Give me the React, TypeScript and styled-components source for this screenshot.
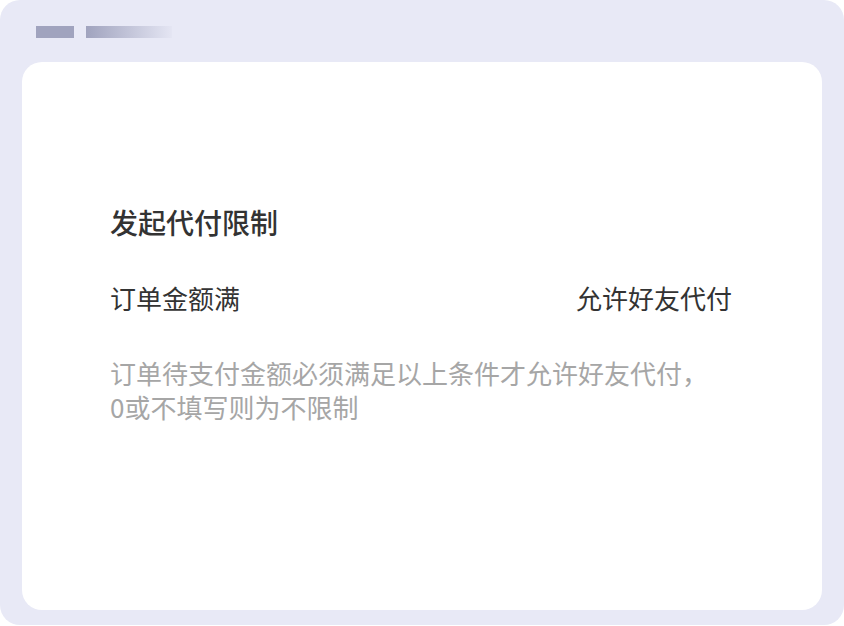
import React from 'react'
import styled, { createGlobalStyle } from 'styled-components'

const GlobalStyle = createGlobalStyle`
  html, body {
    margin: 0;
    padding: 0;
    background: #ffffff;
  }
  body {
    font-family: "Noto Sans CJK SC", "Noto Sans", sans-serif;
  }
`

const App = () => {
  return (
    <>
      <GlobalStyle />
      <Frame>
        <TopBar>
          <Bar />
          <FadeBar />
        </TopBar>
        <Card>
          <Title>发起代付限制</Title>
          <Row>
            <Label>订单金额满</Label>
            <Label>允许好友代付</Label>
          </Row>
          <Hint>
            订单待支付金额必须满足以上条件才允许好友代付，
            <br />
            0或不填写则为不限制
          </Hint>
        </Card>
      </Frame>
    </>
  )
}

export default App

const Hint = styled.div`
  margin-top: 40px;
  font-size: 26px;
  line-height: 34px;
  color: #a6a6a6;
`
const Label = styled.div`
  font-size: 26px;
  line-height: 36px;
  color: #333333;
`
const Row = styled.div`
  display: flex;
  justify-content: space-between;
  align-items: center;
  margin-top: 40px;
`
const Title = styled.div`
  font-size: 28px;
  line-height: 36px;
  font-weight: 500;
  color: #333333;
`
const Card = styled.div`
  flex: 1;
  margin: 0 22px 15px;
  background: #ffffff;
  border-radius: 20px;
  padding: 142px 90px 0 88px;
  display: flex;
  flex-direction: column;
`
const FadeBar = styled.div`
  width: 86px;
  height: 12px;
  background: linear-gradient(to right, #a0a3be, rgba(160, 163, 190, 0.05));
`
const Bar = styled.div`
  width: 38px;
  height: 12px;
  background: #a0a3be;
`
const TopBar = styled.div`
  height: 62px;
  display: flex;
  gap: 12px;
  padding: 26px 0 0 36px;
  box-sizing: border-box;
`
const Frame = styled.div`
  width: 844px;
  height: 625px;
  background: #e8e9f6;
  border-radius: 20px;
  display: flex;
  flex-direction: column;
`
